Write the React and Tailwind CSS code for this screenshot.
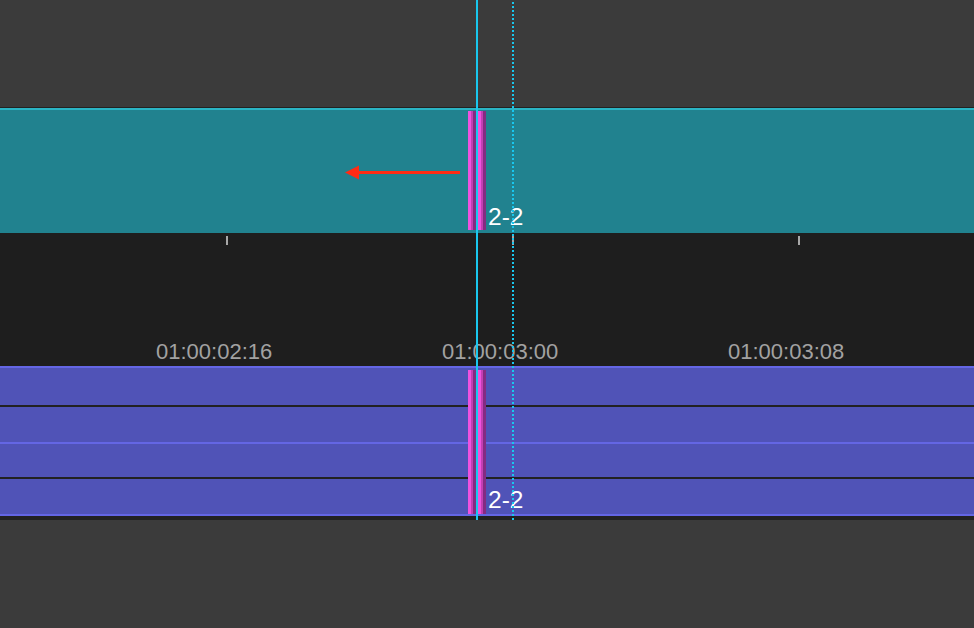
import React from "react";

const font = { fontFamily: '"Liberation Sans", Arial, sans-serif' };

function ClipEdge() {
    return (
        <div className="flex h-full w-[8px]">
            <div className="w-[3px] bg-[#f052df]"></div>
            <div className="w-[2px] bg-[#c23fb4]"></div>
            <div className="w-[3px] bg-[#842b83]"></div>
        </div>
    );
}

function EditPoint({top,height,labelTop}) {
    return (
        <>
            <div className="absolute left-[468px] flex gap-[2px]" style={{top,height}}>
                <ClipEdge/>
                <ClipEdge/>
            </div>
            <div className="absolute left-[488px] text-[24.5px] leading-none text-white" style={{top:labelTop}}>2-2</div>
        </>
    );
}

export default function App() {
    const ticks=[0,1,2];
    const labels=["01:00:02:16","01:00:03:00","01:00:03:08"];
    return (
        <div className="relative flex h-[628px] w-[974px] flex-col overflow-hidden bg-[#3b3b3b]" style={font}>
            {/* upper track */}
            <div className="h-[107px] bg-[#3b3b3b]"></div>
            <div className="h-[1px] bg-[#222222]"></div>
            <div className="h-[125px] border-t-2 border-[#2ab4c4] bg-[#21828f]"></div>

            {/* ruler */}
            <div className="flex h-[133px] flex-col justify-between overflow-hidden bg-[#1e1e1e]">
                <div className="flex pl-[226px] pt-[3px]">
                    {ticks.map((t)=>(
                        <div key={t} className="w-[286px] shrink-0">
                            <div className="h-[9px] w-[2px] bg-[#a8a8a8]"></div>
                        </div>
                    ))}
                </div>
                <div className="flex pb-[3px] pl-[156px]">
                    {labels.map((l)=>(
                        <div key={l} className="w-[286px] shrink-0 whitespace-nowrap text-[22px] leading-[22px] text-[#a2a2a2]">{l}</div>
                    ))}
                </div>
            </div>

            {/* lower tracks */}
            <div className="flex flex-col bg-[#5053b7]">
                <div className="h-[2px] bg-[#6466e4]"></div>
                <div className="h-[37px]"></div>
                <div className="h-[2px] bg-[#222222]"></div>
                <div className="h-[35px]"></div>
                <div className="h-[2px] bg-[#6466e4]"></div>
                <div className="h-[33px]"></div>
                <div className="h-[2px] bg-[#222222]"></div>
                <div className="h-[35px]"></div>
                <div className="h-[2px] bg-[#6466e4]"></div>
            </div>
            <div className="h-[4px] bg-[#222222]"></div>
            <div className="flex-1 bg-[#3b3b3b]"></div>

            {/* edit points */}
            <EditPoint top={111} height={119} labelTop={205}/>
            <EditPoint top={370} height={144} labelTop={488}/>

            {/* trim direction arrow */}
            <svg className="absolute left-[343px] top-[163px]" width="120" height="18" viewBox="0 0 120 18">
                <path d="M16 8h101v3H16z" fill="#ff2b14"/>
                <path d="M2 9.5L16 2.5v14z" fill="#ff2b14"/>
            </svg>

            {/* playhead + skimmer */}
            <div className="absolute left-[476px] top-0 h-[520px] w-[2px] bg-[#19c7ee]"></div>
            <div className="absolute left-[512px] top-0 h-[520px] w-[2px] bg-[repeating-linear-gradient(to_bottom,transparent_0px,transparent_2px,#19c7ee_2px,#19c7ee_4px)]"></div>
        </div>
    );
}
